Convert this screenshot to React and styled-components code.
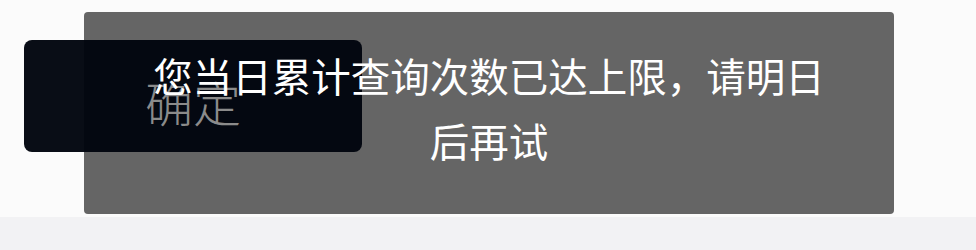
import React from "react";
import styled, { createGlobalStyle } from "styled-components";

const GlobalStyle = createGlobalStyle`
    html, body {
        margin: 0;
        padding: 0;
        background: #fbfbfb;
        font-family: "Noto Sans CJK SC", "Noto Sans", sans-serif;
    }
`;

const Page = styled.div`
    width: 976px;
    height: 250px;
    display: flex;
    flex-direction: column;
    overflow: hidden;
`;

const Stage = styled.div`
    position: relative;
    height: 217px;
    padding: 12px 0 0 84px;
    box-sizing: border-box;
`;

const Toast = styled.div`
    width: 810px;
    height: 202px;
    background: #656565;
    border-radius: 4px;
    display: flex;
    align-items: center;
    justify-content: center;
`;

const Message = styled.p`
    position: relative;
    z-index: 2;
    margin: -13px 0 0;
    width: 690px;
    text-align: center;
    color: #ffffff;
    font-size: 39.5px;
    line-height: 65px;
`;

// the dark confirm dialog lying over the toast
const Dialog = styled.div`
    position: absolute;
    z-index: 1;
    left: 24px;
    top: 40px;
    width: 338px;
    height: 112px;
    border-radius: 8px;
    background: rgba(1, 5, 14, 0.97);
    display: flex;
    align-items: center;
    justify-content: center;
`;

const DialogButton = styled.span`
    color: #8b8b8b;
    font-size: 48px;
    font-weight: 300;
    line-height: 1;
    margin-top: 9px;
`;

const Footer = styled.div`
    flex: 1;
    background: #f2f2f4;
`;

export default function App() {
    return (
        <>
            <GlobalStyle />
            <Page>
                <Stage>
                    <Toast>
                        <Message>您当日累计查询次数已达上限，请明日后再试</Message>
                    </Toast>
                    <Dialog>
                        <DialogButton>确定</DialogButton>
                    </Dialog>
                </Stage>
                <Footer />
            </Page>
        </>
    );
}
